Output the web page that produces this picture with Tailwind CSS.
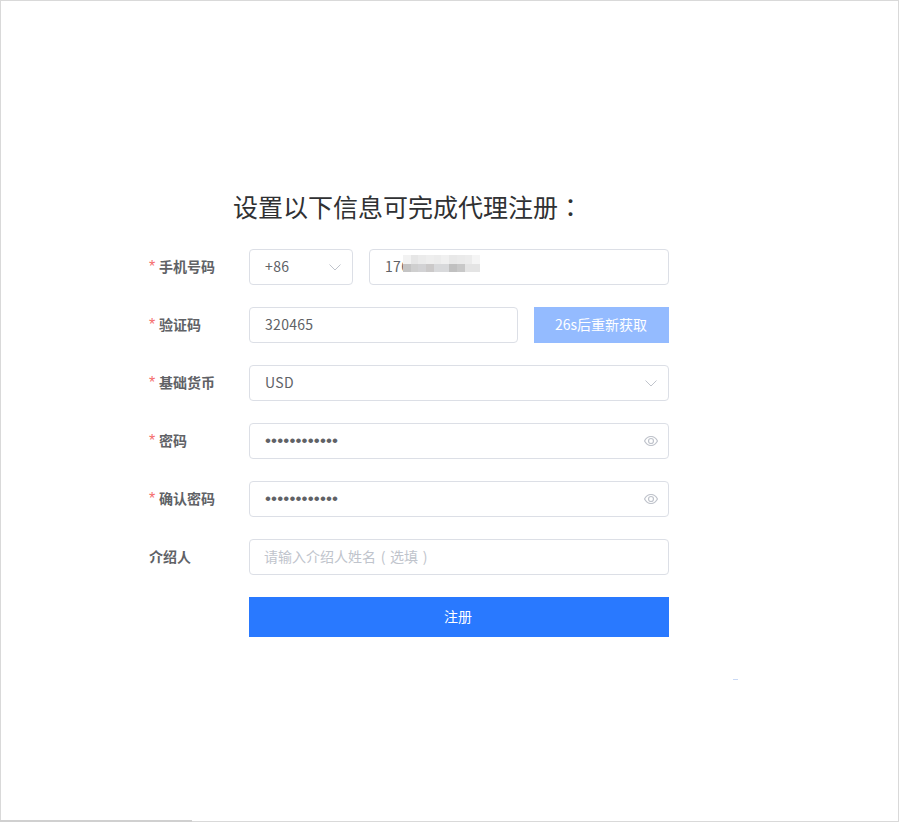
<!DOCTYPE html>
<html lang="zh-CN">
<head>
<meta charset="utf-8">
<script src="https://cdn.jsdelivr.net/npm/@tailwindcss/browser@4"></script>
<title>代理注册</title>
</head>
<body class="bg-white">
<div class="relative h-[822px] w-[899px] border border-[#d9d9d9] bg-white font-['Noto_Sans_CJK_SC','Noto_Sans',sans-serif] text-sm text-[#606266]">
  <div class="ml-[148px] w-[520px] pt-[188px]">
    <h1 class="ml-[84px] mb-[26px] h-[34px] text-[25px] leading-[34px] font-normal whitespace-nowrap text-[#303133]">设置以下信息可完成代理注册<span lang="zh-TW" class="font-['Noto_Sans_CJK_TC',sans-serif]">：</span></h1>
    <div class="flex flex-col gap-[22px]">
      <div class="flex h-9 items-center">
        <label class="w-[100px] pb-[2px] font-bold"><span class="inline-block w-[10px] font-['Liberation_Sans',sans-serif] text-[16px] leading-none font-normal text-[#f56c6c]">*</span>手机号码</label>
        <div class="flex h-9 w-[104px] items-center justify-between rounded border border-[#dcdfe6] pl-[15px] pr-[11px]"><span class="pb-[2px] tracking-[0.4px]">+86</span>
          <svg class="h-3 w-3 text-[#c0c4cc]" viewBox="0 0 12 12" fill="none" stroke="currentColor" stroke-width="1"><path d="M.5 3.5 6 9l5.5-5.500"/></svg>
        </div>
        <div class="relative ml-4 flex h-9 w-[300px] items-center rounded border border-[#dcdfe6] pl-[15px]"><span class="pb-[2px] tracking-[0.3px]">176</span>
          <div class="absolute left-[33px] top-[5px] grid h-[17px] w-[77px] grid-cols-10 grid-rows-2">
            <i class="bg-[#f2f2f2]"></i><i class="bg-[#e6e6e6]"></i><i class="bg-[#ebebeb]"></i><i class="bg-[#eeeeee]"></i><i class="bg-[#ececec]"></i><i class="bg-[#f0f0f0]"></i><i class="bg-[#e8e8e8]"></i><i class="bg-[#eaeaea]"></i><i class="bg-[#ececec]"></i><i class="bg-[#f5f5f5]"></i>
            <i class="bg-[#c4c4c4]"></i><i class="bg-[#cfcfcf]"></i><i class="bg-[#d2d2d4]"></i><i class="bg-[#cbc9c9]"></i><i class="bg-[#d8d9db]"></i><i class="bg-[#d8d9db]"></i><i class="bg-[#c0c0c0]"></i><i class="bg-[#c8c8c8]"></i><i class="bg-[#e4e4e4]"></i><i class="bg-[#e4e4e4]"></i>
          </div>
        </div>
      </div>
      <div class="flex h-9 items-center">
        <label class="w-[100px] pb-[2px] font-bold"><span class="inline-block w-[10px] font-['Liberation_Sans',sans-serif] text-[16px] leading-none font-normal text-[#f56c6c]">*</span>验证码</label>
        <div class="flex h-9 w-[269px] items-center rounded border border-[#dcdfe6] pl-[15px]"><span class="pb-[2px] tracking-[0.3px]">320465</span></div>
        <button class="ml-4 h-9 w-[135px] bg-[#94bbff] pb-[2px] pr-[1px] text-center text-white">26s后重新获取</button>
      </div>
      <div class="flex h-9 items-center">
        <label class="w-[100px] pb-[2px] font-bold"><span class="inline-block w-[10px] font-['Liberation_Sans',sans-serif] text-[16px] leading-none font-normal text-[#f56c6c]">*</span>基础货币</label>
        <div class="flex h-9 w-[420px] items-center justify-between rounded border border-[#dcdfe6] pl-[15px] pr-[11px]"><span class="pb-[2px] tracking-[0.3px]">USD</span>
          <svg class="h-3 w-3 text-[#c0c4cc]" viewBox="0 0 12 12" fill="none" stroke="currentColor" stroke-width="1"><path d="M.5 3.5 6 9l5.5-5.500"/></svg>
        </div>
      </div>
      <div class="flex h-9 items-center">
        <label class="w-[100px] pb-[2px] font-bold"><span class="inline-block w-[10px] font-['Liberation_Sans',sans-serif] text-[16px] leading-none font-normal text-[#f56c6c]">*</span>密码</label>
        <div class="flex h-9 w-[420px] items-center justify-between rounded border border-[#dcdfe6] pl-[15px] pr-[10px]"><span class="font-['Liberation_Sans',sans-serif] text-[17px] tracking-[0.15px]">••••••••••••</span>
          <svg class="h-[10px] w-[14px] text-[#c0c4cc]" viewBox="0 0 14 10" fill="none" stroke="currentColor" stroke-width="1.200"><path d="M.5 5C2.200 2 4.400.5 7 .5S11.800 2 13.500 5C11.800 8 9.600 9.500 7 9.500S2.200 8 .5 5Z"/><circle cx="7" cy="5" r="2.500"/></svg>
        </div>
      </div>
      <div class="flex h-9 items-center">
        <label class="w-[100px] pb-[2px] font-bold"><span class="inline-block w-[10px] font-['Liberation_Sans',sans-serif] text-[16px] leading-none font-normal text-[#f56c6c]">*</span>确认密码</label>
        <div class="flex h-9 w-[420px] items-center justify-between rounded border border-[#dcdfe6] pl-[15px] pr-[10px]"><span class="font-['Liberation_Sans',sans-serif] text-[17px] tracking-[0.15px]">••••••••••••</span>
          <svg class="h-[10px] w-[14px] text-[#c0c4cc]" viewBox="0 0 14 10" fill="none" stroke="currentColor" stroke-width="1.200"><path d="M.5 5C2.200 2 4.400.5 7 .5S11.800 2 13.500 5C11.800 8 9.600 9.500 7 9.500S2.200 8 .5 5Z"/><circle cx="7" cy="5" r="2.500"/></svg>
        </div>
      </div>
      <div class="flex h-9 items-center">
        <label class="w-[100px] pb-[2px] font-bold">介绍人</label>
        <div class="flex h-9 w-[420px] items-center rounded border border-[#dcdfe6] pl-[14px] text-[#c0c4cc]"><span class="pb-[2px]">请输入介绍人姓名<span class="inline-block w-[14px] text-center">(</span>选填<span class="inline-block w-[14px] text-center">)</span></span></div>
      </div>
      <div class="flex h-10 pl-[100px]">
        <button class="h-10 w-[420px] bg-[#2979ff] pb-[2px] pr-[2px] text-center text-white">注册</button>
      </div>
    </div>
  </div>
  <div class="absolute left-[732px] top-[678px] h-px w-[5px] bg-[#c9d9f5]"></div>
  <div class="absolute -bottom-px -left-px h-[2px] w-[192px] bg-[#d0d0d0]"></div>
</div>
</body>
</html>
